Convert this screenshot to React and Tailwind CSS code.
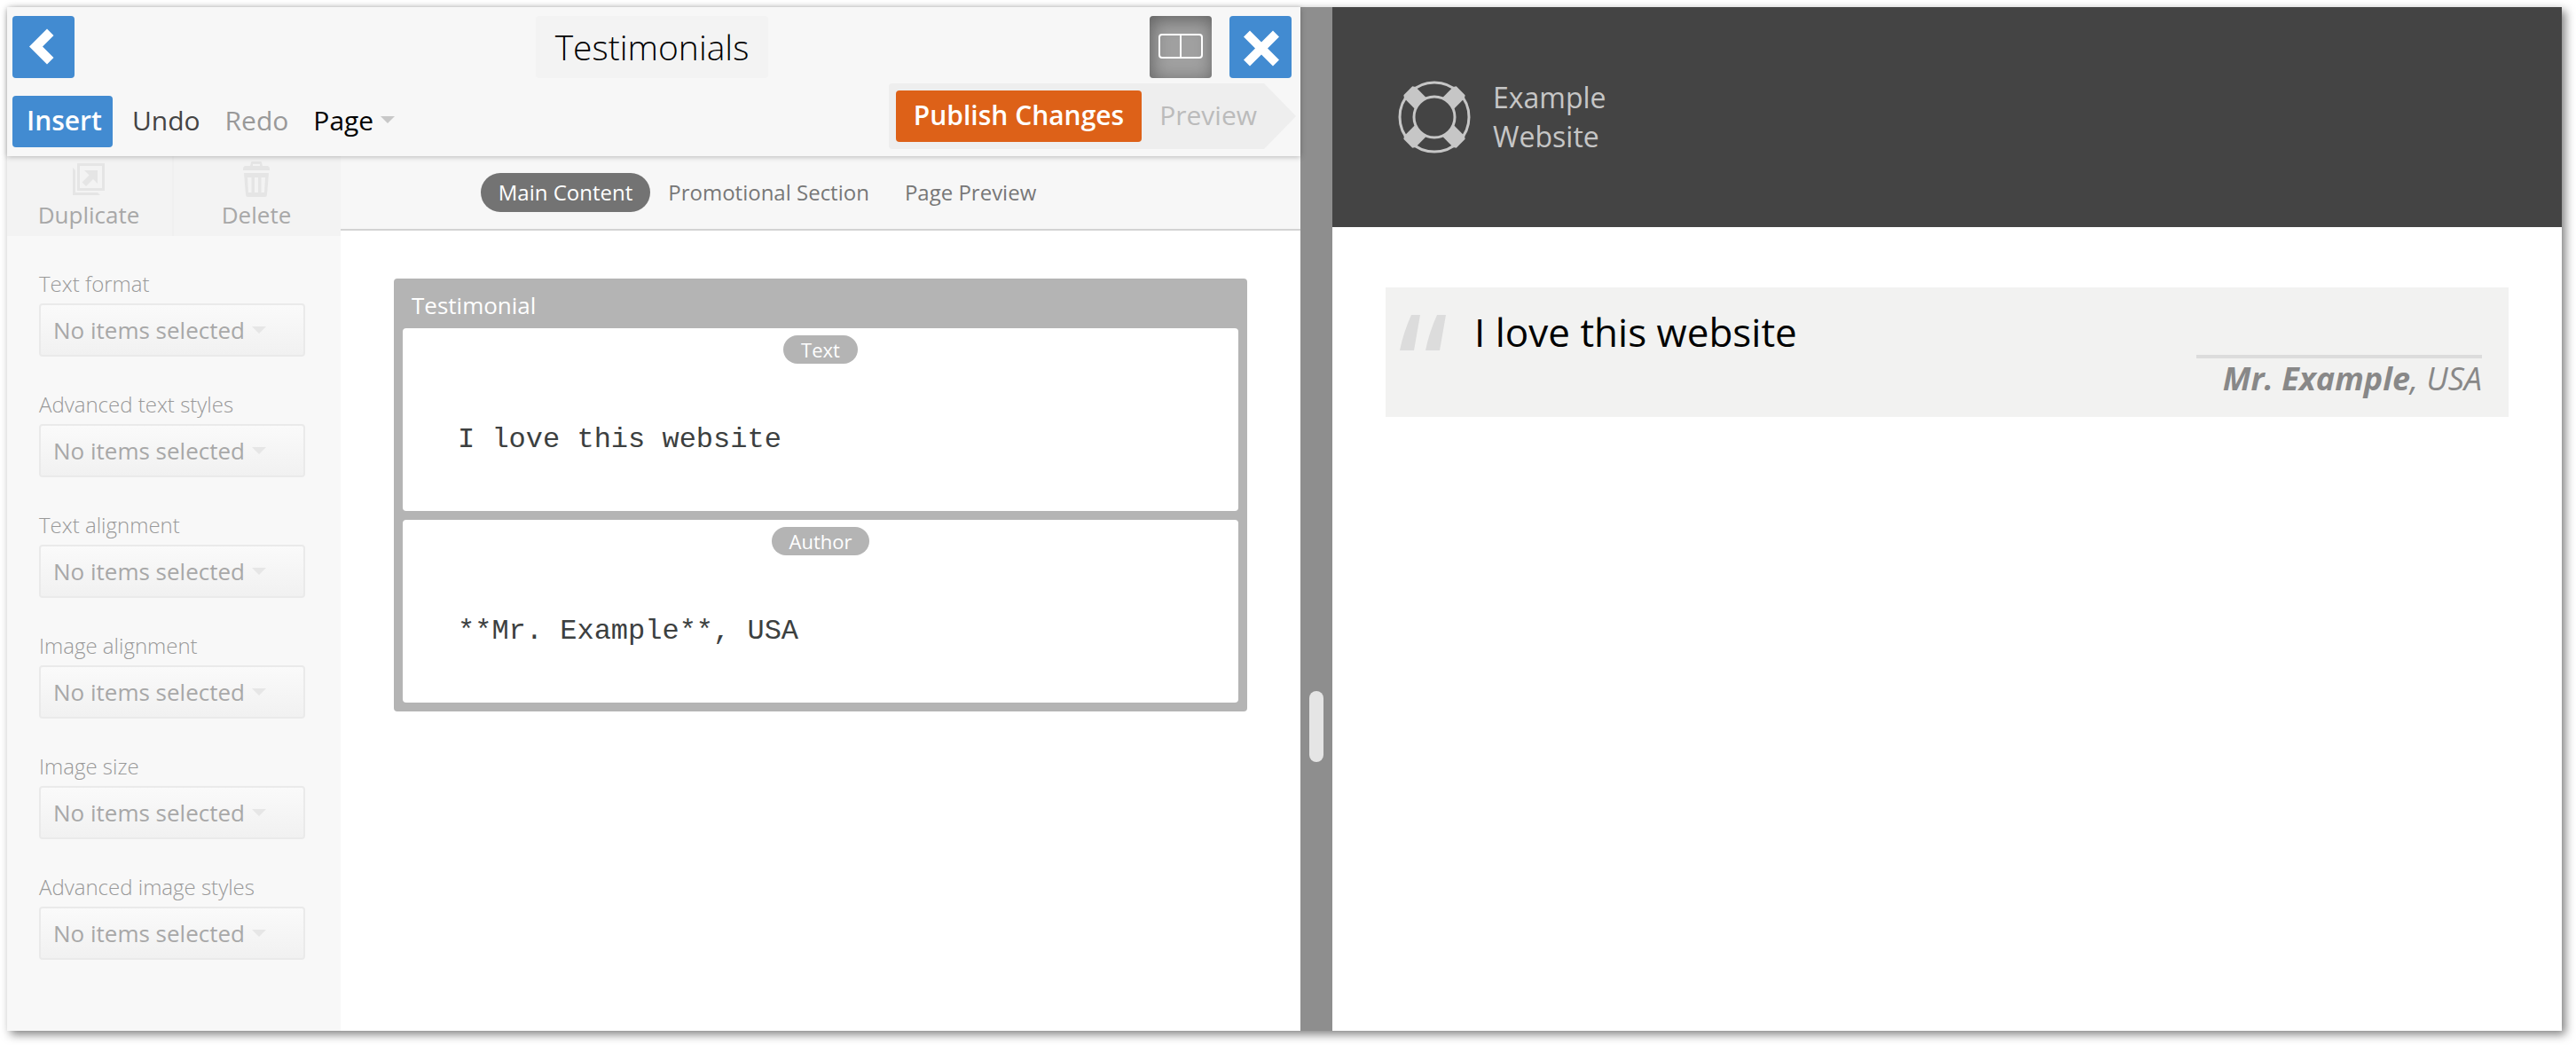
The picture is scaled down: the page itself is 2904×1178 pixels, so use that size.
import React from "react";

const fields = [
  "Text format",
  "Advanced text styles",
  "Text alignment",
  "Image alignment",
  "Image size",
  "Advanced image styles",
];

function ChevronLeft() {
  return (
    <svg viewBox="0 0 70 70" className="size-full" aria-hidden="true">
      <path d="M39 14.5 46.500 22 34 34.500 46.500 47 39 54.500 19 34.500Z" fill="#fff" />
    </svg>
  );
}

function Cross() {
  return (
    <svg viewBox="0 0 70 70" className="size-full" aria-hidden="true">
      <path
        d="M16 23.500 23 16.500 36 29.500 49 16.500 56 23.500 43 36.500 56 49.500 49 56.500 36 43.500 23 56.500 16 49.500 29 36.500Z"
        fill="#fff"
      />
    </svg>
  );
}

function SplitView() {
  return (
    <svg viewBox="0 0 70 70" className="size-full" aria-hidden="true">
      <rect x="11" y="21" width="48" height="26" rx="3" fill="none" stroke="#fff" strokeWidth="2" />
      <path d="M35 21V47" stroke="#fff" strokeWidth="2" />
    </svg>
  );
}

function DuplicateIcon() {
  return (
    <svg viewBox="0 0 36 36" className="size-9" fill="#e5e5e5" aria-hidden="true">
      <path d="M5 0H36V31H5ZM8 3V28H33V3Z" fillRule="evenodd" />
      <path d="M0 5 3 8V33H28L31 36H0Z" />
      <path d="M13 8H28V23L23 18 15 26 10.500 21.500 18.500 13.500Z" />
    </svg>
  );
}

function TrashIcon() {
  return (
    <svg viewBox="0 0 30 40" className="h-10 w-[30px]" fill="#e5e5e5" aria-hidden="true">
      <path d="M8 5 9 1Q9.300 0 10.500 0H19.500Q20.700 0 21 1L22 5H27Q29.500 5 30 8V10H0V8Q.5 5 3 5ZM11 5H19V3H11Z" fillRule="evenodd" />
      <path
        d="M1 13H29L27 37.500Q26.800 40 24.500 40H5.500Q3.200 40 3 37.500ZM5 18 6 35H9.500V18ZM13 18V35H17V18ZM20.500 18V35H24L25 18Z"
        fillRule="evenodd"
      />
    </svg>
  );
}

function Caret({ className }) {
  return (
    <svg viewBox="0 0 16 8" className={className} aria-hidden="true">
      <path d="M0 0H16L8 8Z" fill="currentColor" />
    </svg>
  );
}

function LifeRing() {
  return (
    <svg viewBox="-42 -42 84 84" className="size-[84px]" aria-hidden="true">
      <circle r="39" fill="none" stroke="#c6c6c6" strokeWidth="3" />
      <g fill="#c6c6c6">
        <path d="M-7-42H7L9-39V-18H-9V-39Z" transform="rotate(45)" />
        <path d="M-7-42H7L9-39V-18H-9V-39Z" transform="rotate(135)" />
        <path d="M-7-42H7L9-39V-18H-9V-39Z" transform="rotate(225)" />
        <path d="M-7-42H7L9-39V-18H-9V-39Z" transform="rotate(315)" />
      </g>
      <circle r="23" fill="#444" stroke="#c6c6c6" strokeWidth="3" />
    </svg>
  );
}

function StyleField({ label }) {
  const id = label.toLowerCase().replace(/ /g, "-");
  return (
    <div>
      <label htmlFor={id} className="block h-[38px] text-[24px] leading-8 font-light text-[#999]">
        {label}
      </label>
      <div className="relative">
        <select
          id={id}
          disabled
          className="block h-15 w-full appearance-none rounded border-2 border-[#eaeaea] bg-linear-to-b from-[#fafafa] to-[#f1f1f1] px-[14px] text-[26px] text-[#a8a8a8] opacity-100"
        >
          <option>No items selected</option>
        </select>
        <Caret className="pointer-events-none absolute top-[26px] left-60 h-2 w-4 text-[#e6e6e6]" />
      </div>
    </div>
  );
}

function BlockField({ label, value }) {
  const id = "block-" + label.toLowerCase();
  return (
    <div className="flex h-[206px] flex-col items-center rounded bg-white pt-2">
      <label htmlFor={id} className="rounded-2xl bg-[#b4b4b4] px-5 text-[22px] leading-8 text-white">
        {label}
      </label>
      <textarea
        id={id}
        rows={1}
        defaultValue={value}
        className="mt-[66px] block h-12 w-full resize-none overflow-hidden bg-transparent px-[62px] font-['Liberation_Mono',monospace] text-[32px] leading-10 text-[#3c4040] outline-none"
      />
    </div>
  );
}

function Editor() {
  return (
    <section className="flex min-w-0 flex-col bg-white">
      <header className="relative flex h-[168px] flex-col bg-[#f7f7f7] shadow-[0_1px_6px_rgba(0,0,0,0.25)]">
        <div className="grid grid-cols-[1fr_auto_1fr] items-center pt-[10px] pr-[10px] pl-[6px]">
          <button aria-label="Back" className="size-[70px] rounded bg-[#428bd1]">
            <ChevronLeft />
          </button>
          <h1 className="h-[70px] rounded bg-[#f3f3f3] px-[22px] text-[39px] leading-[70px] font-light text-black">
            Testimonials
          </h1>
          <div className="flex justify-end gap-5">
            <button
              aria-label="Split view"
              className="size-[70px] rounded bg-[#a0a0a0] shadow-[inset_2px_4px_20px_rgba(0,0,0,0.4)]"
            >
              <SplitView />
            </button>
            <button aria-label="Close" className="size-[70px] rounded bg-[#428bd1]">
              <Cross />
            </button>
          </div>
        </div>
        <div className="flex items-start justify-between pt-[6px] pr-[5px] pl-[6px]">
          <div className="mt-[14px] flex h-[58px] items-stretch text-[30px]">
            <button className="rounded bg-[#428bd1] pr-3 pb-1 pl-4 font-semibold text-white">Insert</button>
            <button className="ml-[22px] pb-1 text-[#444]">Undo</button>
            <button className="ml-7 pb-1 text-[#999]">Redo</button>
            <button className="ml-7 flex items-center gap-2 pb-1 text-black">
              Page
              <Caret className="h-2 w-4 text-[#c8c8c8]" />
            </button>
          </div>
          <div className="flex">
            <div className="flex h-[74px] items-center rounded-l bg-[#eee] pl-2 text-[30px]">
              <button className="h-[58px] rounded bg-[#dd6118] px-5 pb-1 font-semibold text-white">
                Publish Changes
              </button>
              <button className="ml-5 pb-1 text-[#bbb]">Preview</button>
              <span className="w-2" />
            </div>
            <svg viewBox="0 0 36 74" className="h-[74px] w-9" aria-hidden="true">
              <path d="M0 0 36 37 0 74Z" fill="#eee" />
            </svg>
          </div>
        </div>
      </header>

      <div className="flex flex-1">
        <aside className="w-[376px] bg-[#f8f8f8]">
          <div className="grid h-[90px] grid-cols-2 bg-[#f3f3f3] text-[26px] leading-8 text-[#a8a8a8]">
            <button className="flex flex-col items-center border-r-2 border-[#f0f0f0] pt-2 pr-[2px]">
              <DuplicateIcon />
              <span className="mt-[6px]">Duplicate</span>
            </button>
            <button className="flex flex-col items-center pt-[6px] pr-[2px]">
              <TrashIcon />
              <span className="mt-1">Delete</span>
            </button>
          </div>
          <div className="flex flex-col gap-[38px] px-9 pt-[38px] pr-10">
            {fields.map((f) => (
              <StyleField key={f} label={f} />
            ))}
          </div>
        </aside>

        <main className="min-w-0 flex-1">
          <nav className="flex h-[84px] items-center justify-center border-b-2 border-[#d3d3d3] bg-[#f7f7f7] pr-30 text-[24px] leading-[44px] text-[#777]">
            <button className="rounded-full bg-[#737373] px-5 text-white">Main Content</button>
            <button className="px-5">Promotional Section</button>
            <button className="px-5">Page Preview</button>
          </nav>
          <div className="mx-15 mt-[54px] flex flex-col rounded bg-[#b4b4b4] px-[10px] pb-[10px]">
            <h2 className="h-14 px-[10px] text-[26px] leading-15 text-white">Testimonial</h2>
            <div className="flex flex-col gap-[10px]">
              <BlockField label="Text" value="I love this website" />
              <BlockField label="Author" value="**Mr. Example**, USA" />
            </div>
          </div>
        </main>
      </div>
    </section>
  );
}

function SitePreview() {
  return (
    <section className="min-w-0 bg-white">
      <header className="flex h-[248px] items-center gap-6 bg-[#444] pl-[73px] text-[#c6c6c6]">
        <LifeRing />
        <p className="text-[32px] leading-11">
          Example
          <br />
          Website
        </p>
      </header>
      <blockquote className="mx-15 mt-[68px] flex h-[146px] bg-[#f2f2f1] px-4">
        <svg viewBox="0 0 52 40" className="mt-[31px] h-10 w-[52px]" fill="#dcdcdc" aria-hidden="true">
          <path d="M13 0H23L16 40H0Q4 20 13 0Z" />
          <path d="M42 0H52L45 40H29Q33 20 42 0Z" />
        </svg>
        <p className="mt-4 ml-8 text-[44px] leading-[68px] text-black">I love this website</p>
        <footer className="mt-[76px] ml-auto mr-[14px] h-12 border-t-4 border-[#dcdcdc] pl-[30px] text-[36px] leading-[46px] text-[#888] italic">
          <strong className="font-bold">Mr. Example</strong>, USA
        </footer>
      </blockquote>
    </section>
  );
}

export default function App() {
  return (
    <div className="flex min-h-screen bg-white pt-2 pr-4 pb-4 pl-2 font-['Open_Sans',sans-serif]">
      <div className="grid flex-1 grid-cols-[minmax(0,1458fr)_36px_minmax(0,1386fr)] shadow-[4px_4px_10px_rgba(0,0,0,0.5)]">
        <Editor />
        <div className="flex items-center justify-center bg-[#8e8e8e] pt-[468px] pb-0">
          <div role="separator" aria-orientation="vertical" className="h-20 w-4 rounded-full bg-[#e5e5e5]" />
        </div>
        <SitePreview />
      </div>
    </div>
  );
}
